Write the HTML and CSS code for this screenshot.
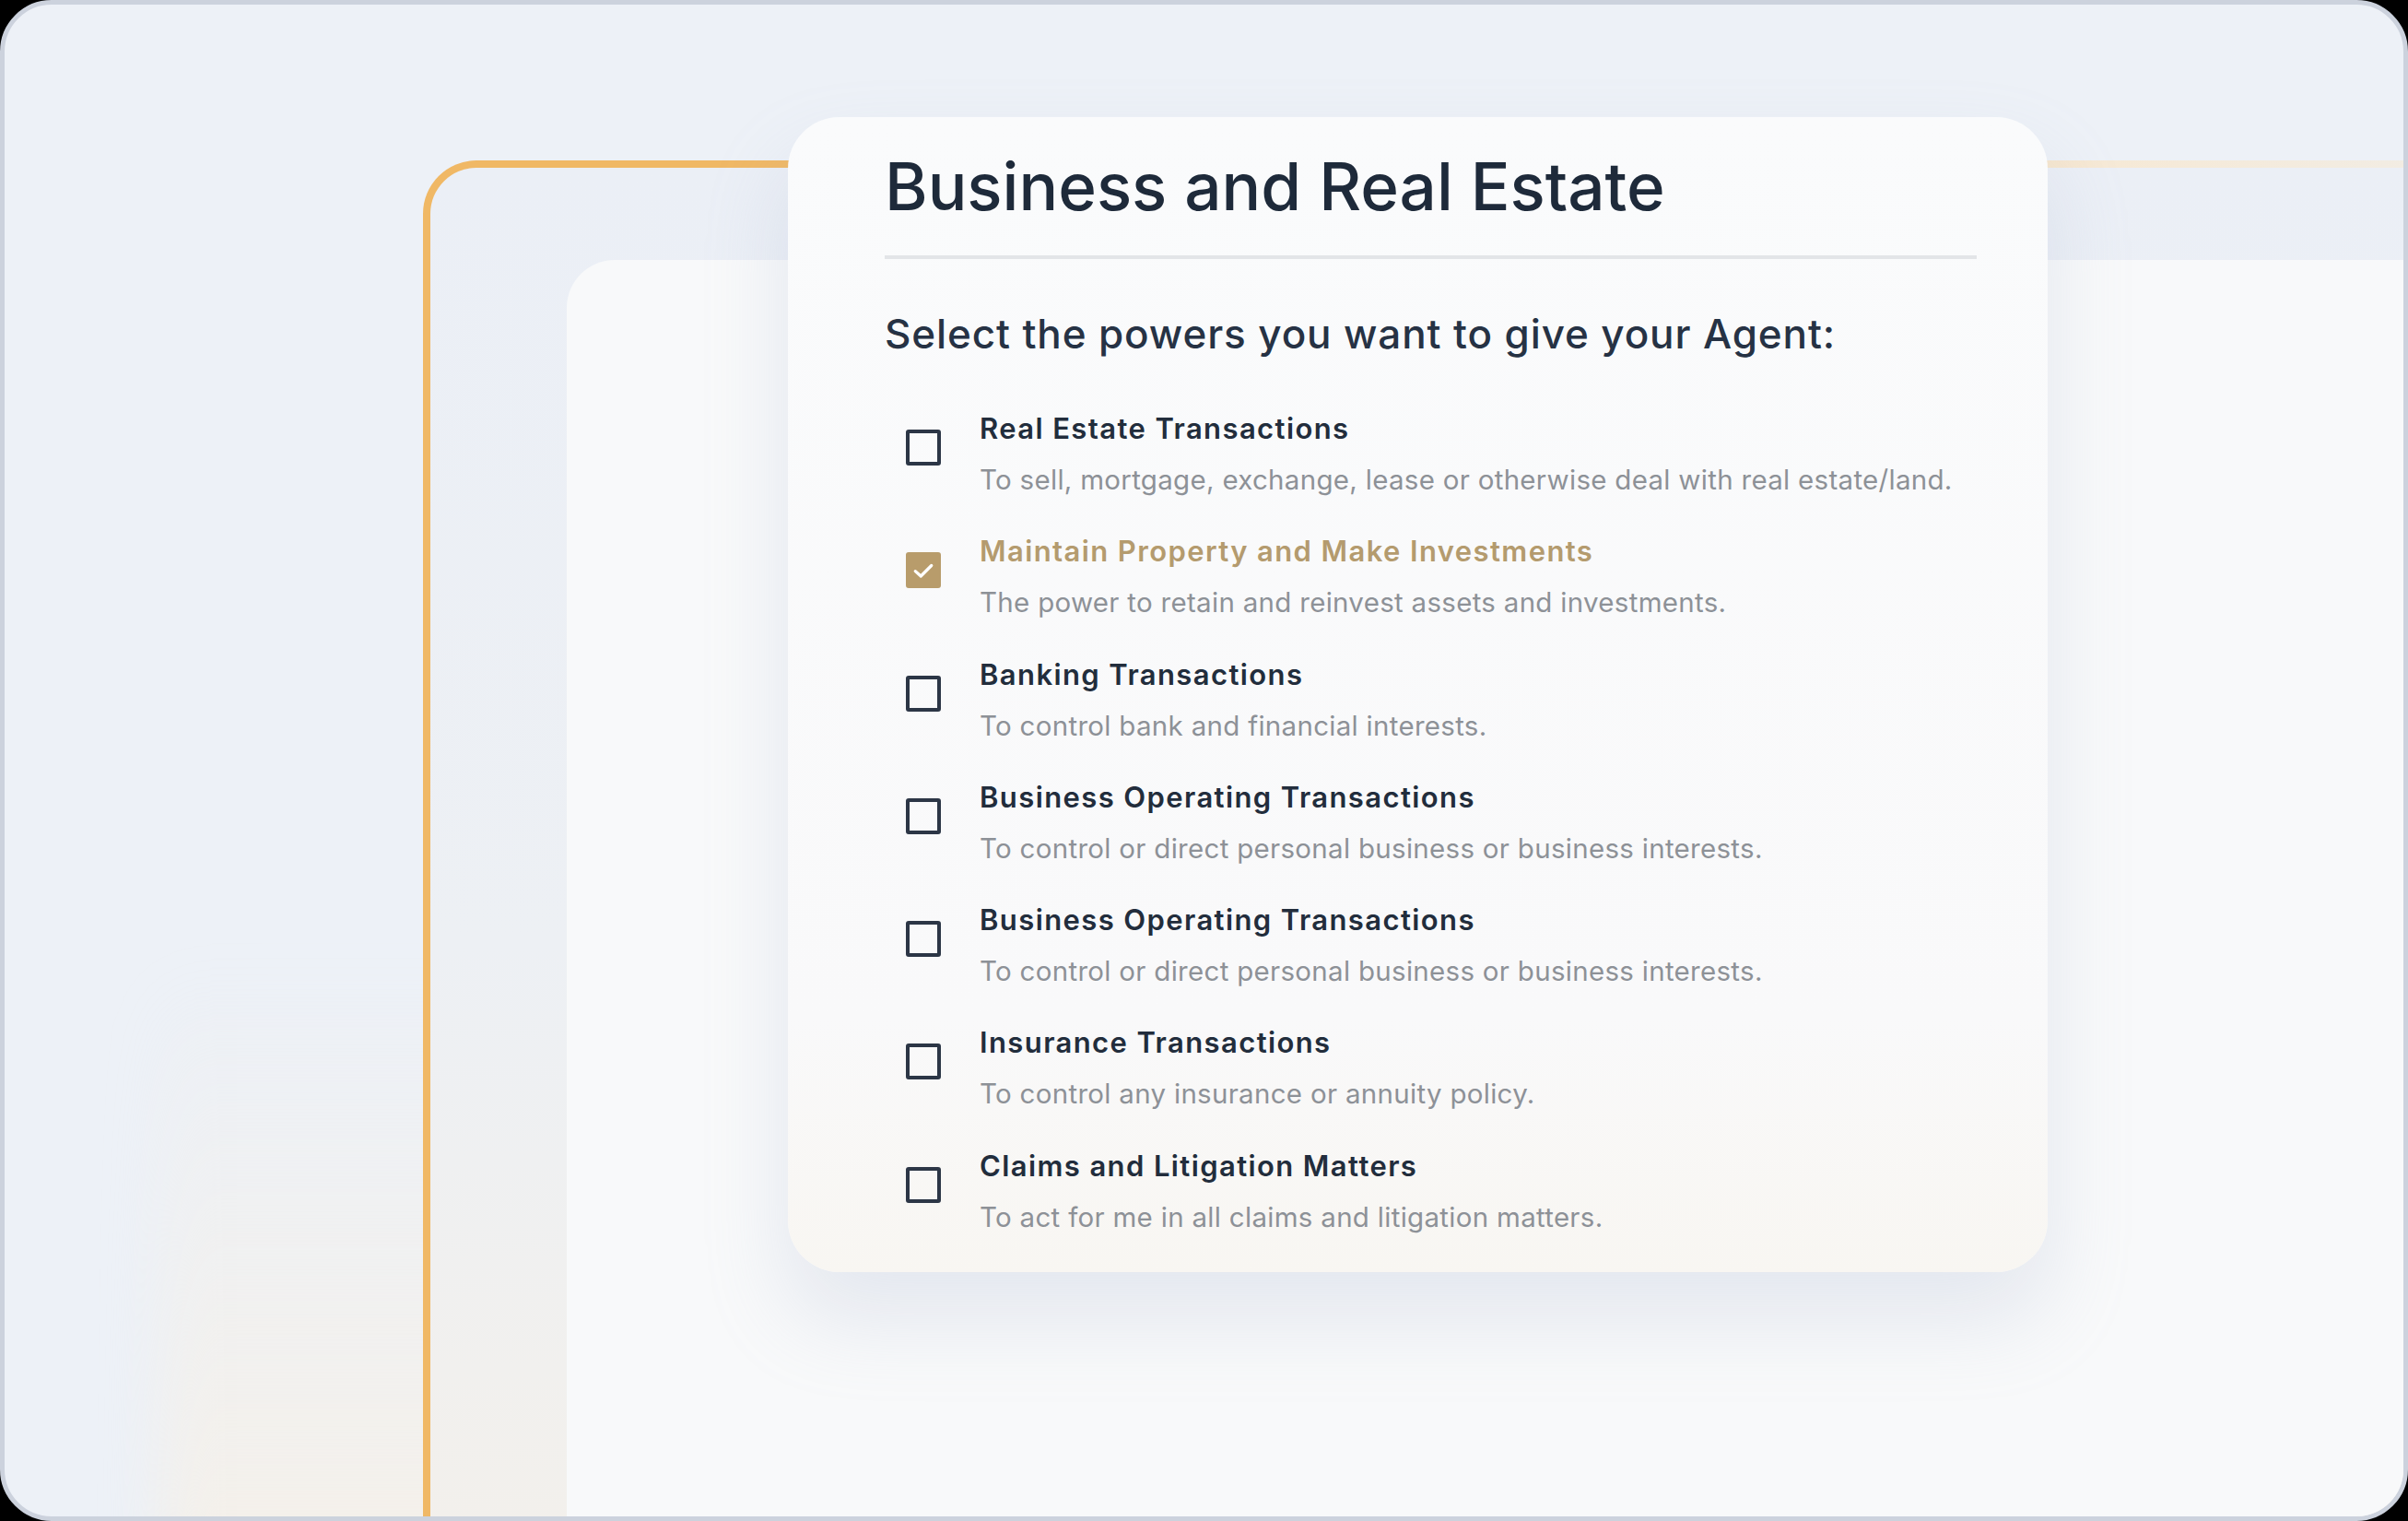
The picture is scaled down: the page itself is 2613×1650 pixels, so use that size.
FILE: index.html
```html
<!DOCTYPE html>
<html>
  <head>
    <title>Business and Real Estate - Powers</title>
    <meta charset="UTF-8" />
    <meta name="viewport" content="width=device-width, initial-scale=1.0" />
    <link rel="stylesheet" href="styles.css">
  </head>
  <body>
    <div class="frame">
      <!-- decorative layers behind the card -->
      <div class="layer-glow"></div>
      <div class="layer-orange"></div>
      <div class="layer-white"></div>

      <div class="card">
        <h1>Business and Real Estate</h1>
        <hr class="divider">
        <h2>Select the powers you want to give your Agent:</h2>

        <ul class="powers">
          <li class="power">
            <span class="box"></span>
            <div class="text">
              <div class="title">Real Estate Transactions</div>
              <div class="desc">To sell, mortgage, exchange, lease or otherwise deal with real estate/land.</div>
            </div>
          </li>
          <li class="power checked">
            <span class="box">
              <svg viewBox="0 0 24 24" width="34" height="34"><polyline points="5,12.5 9.8,16.8 19,7.6" fill="none" stroke="#fff" stroke-width="2.6" stroke-linecap="round" stroke-linejoin="round"/></svg>
            </span>
            <div class="text">
              <div class="title">Maintain Property and Make Investments</div>
              <div class="desc">The power to retain and reinvest assets and investments.</div>
            </div>
          </li>
          <li class="power">
            <span class="box"></span>
            <div class="text">
              <div class="title">Banking Transactions</div>
              <div class="desc">To control bank and financial interests.</div>
            </div>
          </li>
          <li class="power">
            <span class="box"></span>
            <div class="text">
              <div class="title">Business Operating Transactions</div>
              <div class="desc">To control or direct personal business or business interests.</div>
            </div>
          </li>
          <li class="power">
            <span class="box"></span>
            <div class="text">
              <div class="title">Business Operating Transactions</div>
              <div class="desc">To control or direct personal business or business interests.</div>
            </div>
          </li>
          <li class="power">
            <span class="box"></span>
            <div class="text">
              <div class="title">Insurance Transactions</div>
              <div class="desc">To control any insurance or annuity policy.</div>
            </div>
          </li>
          <li class="power">
            <span class="box"></span>
            <div class="text">
              <div class="title">Claims and Litigation Matters</div>
              <div class="desc">To act for me in all claims and litigation matters.</div>
            </div>
          </li>
        </ul>
      </div>
    </div>
  </body>
</html>
```

FILE: styles.css
```css
html, body {
  margin: 0;
  height: 100%;
}
body {
  background: #000;
  font-family: Inter, "Noto Sans", sans-serif;
  overflow: hidden;
}
.frame {
  position: relative;
  box-sizing: border-box;
  width: 100%;
  height: 100%;
  border: 5px solid #ccd2dd;
  border-radius: 56px;
  background: #edf1f7;
  overflow: hidden;
  padding: 122px 0 0 850px;
}

/* background layers */
.layer-glow {
  position: absolute;
  left: 170px;
  top: 1050px;
  width: 900px;
  height: 800px;
  border-radius: 60px;
  background: linear-gradient(rgba(247, 240, 229, 0), rgba(247, 240, 229, 0.9));
  filter: blur(30px);
}
.layer-orange {
  position: absolute;
  left: 454px;
  top: 169px;
  right: -80px;
  bottom: -80px;
  border: 8px solid transparent;
  border-radius: 58px;
  background:
    linear-gradient(#ebeff6 0%, #edf0f4 55%, #f3f0eb 100%) padding-box,
    linear-gradient(90deg, #f0b865 0%, #f0b865 40%, #f6e9d6 82%, #f1ede6 100%) border-box;
}
.layer-white {
  position: absolute;
  left: 610px;
  top: 277px;
  right: -80px;
  bottom: -80px;
  border-radius: 52px;
  background: #f8f9fa;
}

.card {
  position: relative;
  box-sizing: border-box;
  width: 1367px;
  height: 1253px;
  padding: 33px 77px 0 105px;
  border-radius: 56px;
  background: linear-gradient(#fafbfc 0%, #f9f9fa 78%, #f8f6f2 100%);
  box-shadow: 0 50px 90px rgba(165, 176, 205, 0.24);
  color: #1f2a3a;
}
h1 {
  margin: 0;
  font-size: 71px;
  line-height: 84px;
  font-weight: 500;
  color: #1e2a3a;
}
.divider {
  margin: 33px 0 0;
  border: none;
  height: 4px;
  background: #e3e5e8;
}
h2 {
  margin: 55px 0 0;
  font-size: 44px;
  line-height: 52px;
  font-weight: 500;
  letter-spacing: 0.02em;
  color: #263244;
}
.powers {
  list-style: none;
  margin: 57px 0 0;
  padding: 0;
}
.power {
  display: flex;
  align-items: flex-start;
  gap: 42px;
  height: 133.3px;
}
.box {
  box-sizing: border-box;
  width: 38px;
  height: 39px;
  margin: 21px 0 0 23px;
  flex: none;
  border: 4px solid #2c3646;
  border-radius: 3px;
  display: flex;
  align-items: center;
  justify-content: center;
}
.checked .box {
  background: #b89c6b;
  border-color: #b89c6b;
}
.title {
  font-size: 31px;
  line-height: 40px;
  font-weight: 600;
  letter-spacing: 0.045em;
  color: #222d3c;
}
.checked .title {
  color: #b49b6e;
}
.desc {
  margin-top: 15px;
  font-size: 29.5px;
  line-height: 40px;
  letter-spacing: 0.01em;
  color: #8d9197;
}
```
